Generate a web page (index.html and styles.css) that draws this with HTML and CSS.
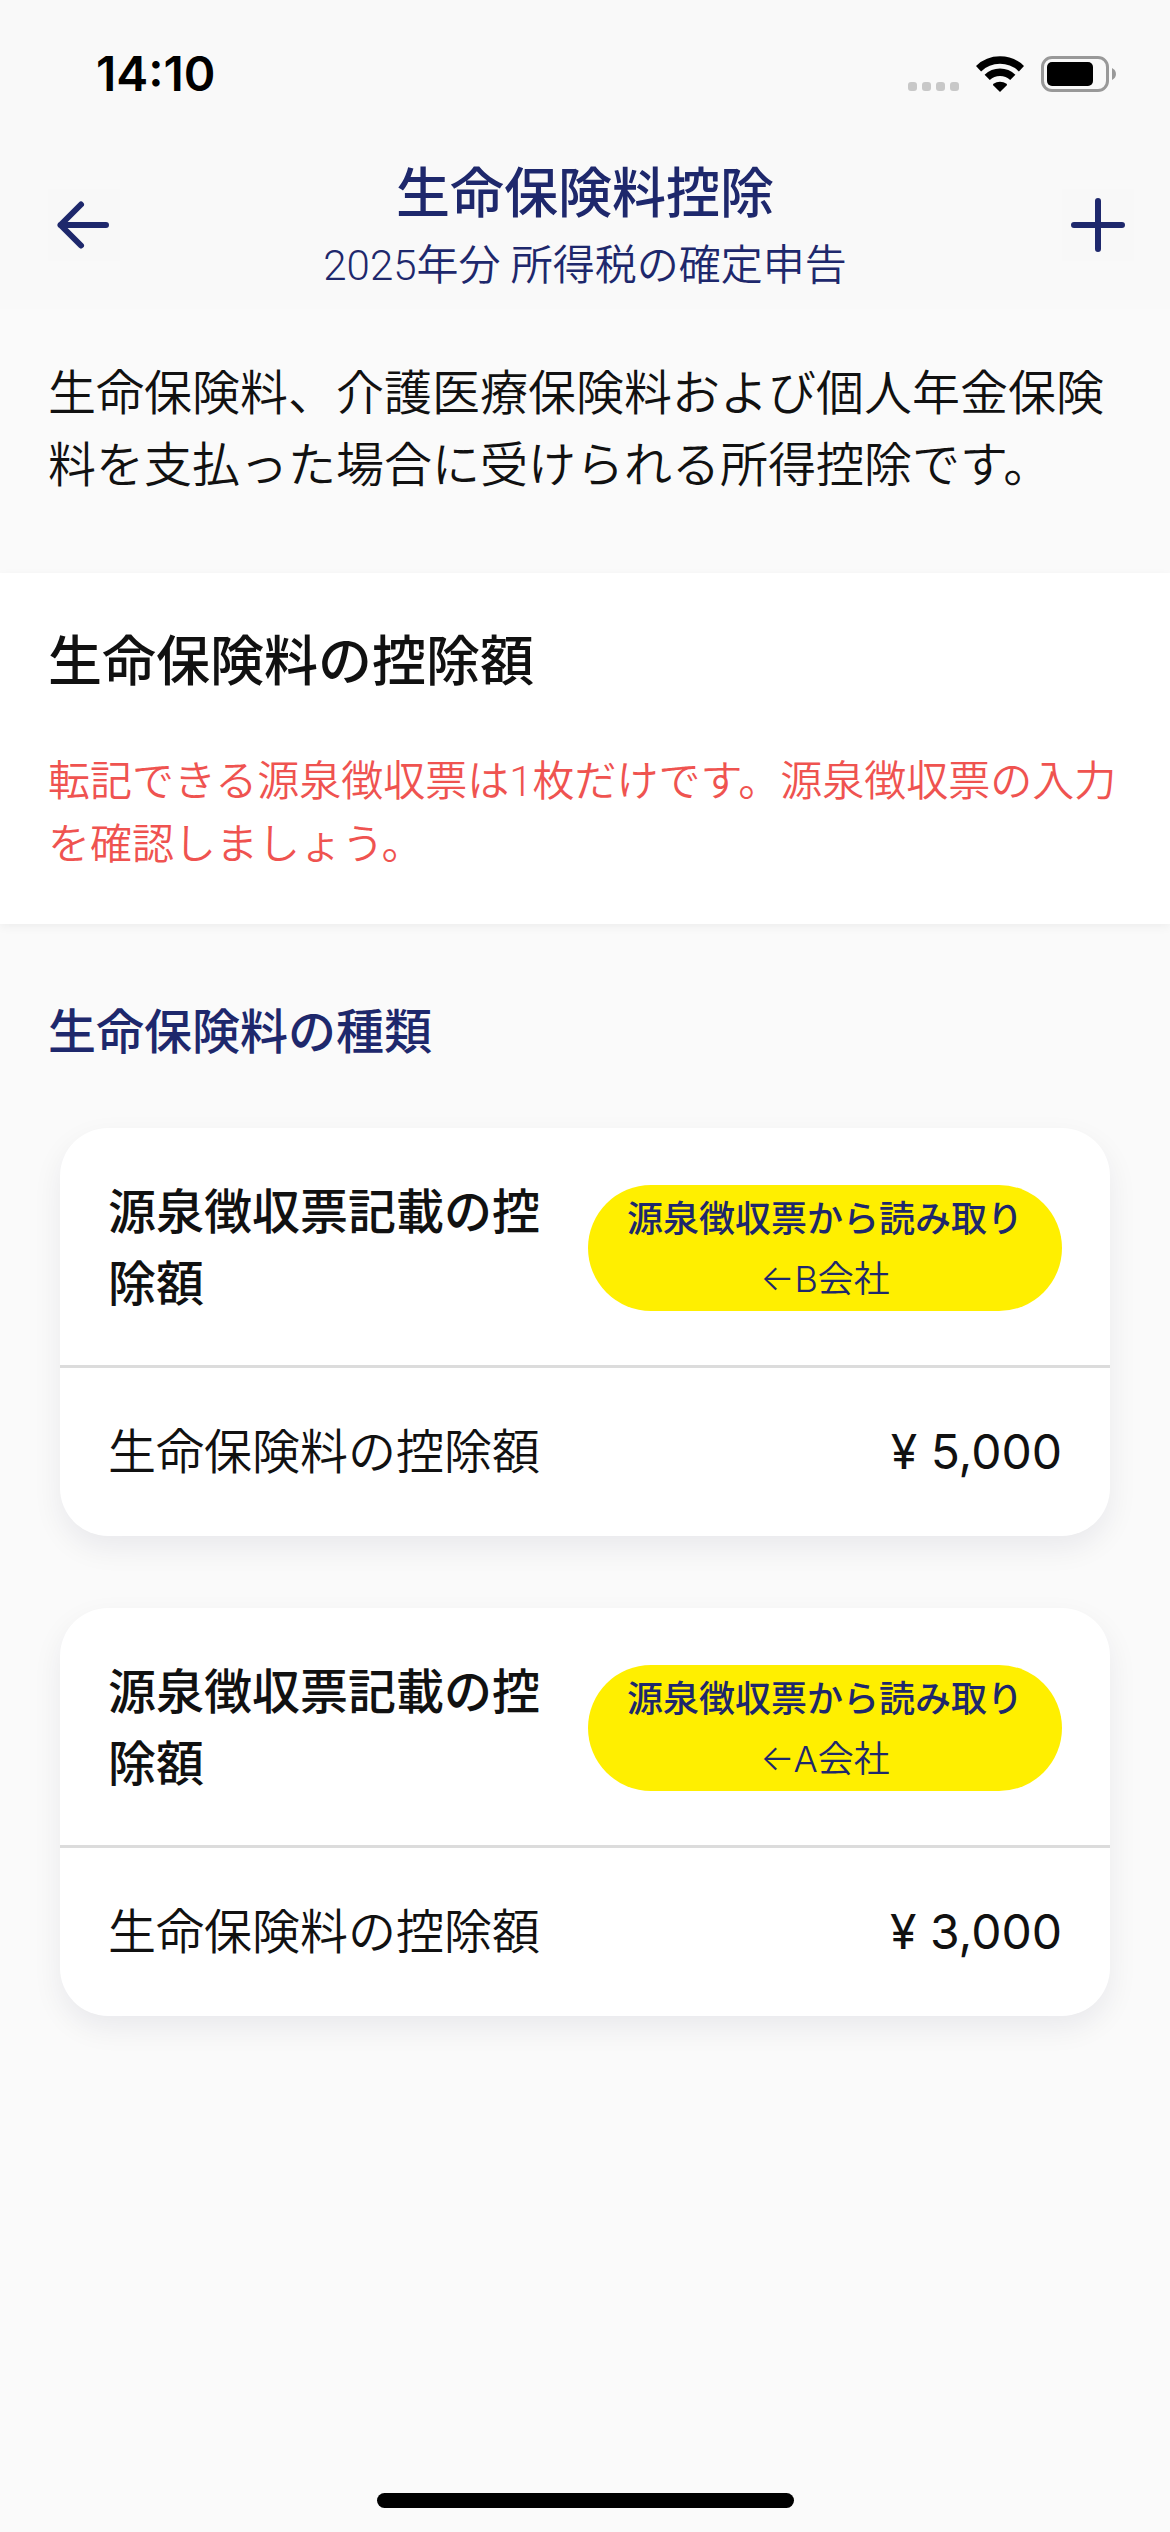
FILE: index.html
```html
<!DOCTYPE html>
<html lang="ja">

<head>
    <meta charset="UTF-8">
    <meta name="viewport" content="width=device-width, initial-scale=1.0">
    <title>生命保険料控除</title>
    <link rel="stylesheet" href="styles.css">
</head>

<body>
    <div class="status-bar">
        <span class="time">14:10</span>
        <div class="status-icons">
            <svg class="signal" width="51" height="36" viewBox="0 0 51 36" fill="#c8c8c8">
                <rect x="0" y="26" width="9" height="9" rx="3" />
                <rect x="14" y="26" width="9" height="9" rx="3" />
                <rect x="28" y="26" width="9" height="9" rx="3" />
                <rect x="42" y="26" width="9" height="9" rx="3" />
            </svg>
            <svg class="wifi" width="48" height="36" viewBox="0 0 48 36">
                <g fill="none" stroke="#000" stroke-width="7.5">
                    <path d="M2.5 12.7 A31 31 0 0 1 45.5 12.7" />
                    <path d="M11.2 21.4 A18.5 18.5 0 0 1 36.8 21.4" />
                </g>
                <path d="M24 36 L17.4 29.4 C16.9 28.9 17 28.2 17.5 27.8 C21.3 24.9 26.7 24.9 30.5 27.8 C31 28.2 31.1 28.9 30.6 29.4 Z" />
            </svg>
            <svg class="battery" width="75" height="36" viewBox="0 0 75 36">
                <rect x="1.5" y="1.5" width="65" height="33" rx="9.5" fill="none" stroke="#999" stroke-width="3" />
                <rect x="6" y="6" width="46" height="24" rx="5" />
                <path d="M71 12 C76.3 14.5 76.3 21.5 71 24 Z" fill="#999" />
            </svg>
        </div>
    </div>

    <header class="header">
        <button class="icon-button" type="button" aria-label="戻る">
            <svg width="72" height="72" viewBox="0 0 72 72">
                <path d="M58 36 H12.5 M33 15.5 L12.5 36 L33 56.5" />
            </svg>
        </button>
        <div class="header-text">
            <h1>生命保険料控除</h1>
            <p>2025年分 所得税の確定申告</p>
        </div>
        <button class="icon-button" type="button" aria-label="追加">
            <svg width="72" height="72" viewBox="0 0 72 72">
                <path d="M36 12 V60 M12 36 H60" />
            </svg>
        </button>
    </header>

    <main>
        <p class="intro">生命保険料、介護医療保険料および個人年金保険料を支払った場合に受けられる所得控除です。</p>

        <section class="summary">
            <h2>生命保険料の控除額</h2>
            <p class="warning">転記できる源泉徴収票は1枚だけです。源泉徴収票の入力を確認しましょう。</p>
        </section>

        <section class="types">
            <h2>生命保険料の種類</h2>

            <article class="card">
                <div class="card-header">
                    <h3>源泉徴収票記載の控除額</h3>
                    <div class="badge">
                        <strong>源泉徴収票から読み取り</strong>
                        <span>←B会社</span>
                    </div>
                </div>
                <dl class="card-row">
                    <dt>生命保険料の控除額</dt>
                    <dd>¥ 5,000</dd>
                </dl>
            </article>

            <article class="card">
                <div class="card-header">
                    <h3>源泉徴収票記載の控除額</h3>
                    <div class="badge">
                        <strong>源泉徴収票から読み取り</strong>
                        <span>←A会社</span>
                    </div>
                </div>
                <dl class="card-row">
                    <dt>生命保険料の控除額</dt>
                    <dd>¥ 3,000</dd>
                </dl>
            </article>
        </section>
    </main>

    <div class="home-indicator"></div>
</body>

</html>
```
FILE: styles.css
```css
* {
    box-sizing: border-box;
}

body {
    display: flex;
    flex-direction: column;
    min-height: 100vh;
    margin: 0;
    background-color: #fafafa;
    color: #111;
    font-family: Inter, "Noto Sans CJK JP", sans-serif;
    font-size: 48px;
    font-weight: 350;
    line-height: 72px;
}

h1,
h2,
h3,
p,
dl,
dd {
    margin: 0;
}

h1,
h2,
h3,
strong {
    font-weight: 500;
}

/* status bar */
.status-bar {
    display: flex;
    justify-content: space-between;
    align-items: center;
    height: 141px;
    padding: 7px 54px 0 96px;
    background-color: #f9f9f9;
}

.time {
    color: #000;
    font-size: 48px;
    font-weight: 600;
}

.status-icons {
    display: flex;
    gap: 17px;
}

/* header */
.header {
    display: grid;
    grid-template-columns: 84px 1fr 84px;
    align-items: center;
    padding: 12px 36px;
    background-color: #f9f9f9;
    color: #1e286c;
    text-align: center;
}

.header h1 {
    font-size: 54px;
    line-height: 81px;
}

.header p,
.warning {
    font-family: Roboto, "Noto Sans CJK JP", sans-serif;
    font-size: 42px;
    line-height: 63px;
}

.icon-button {
    justify-self: end;
    width: 72px;
    height: 72px;
    padding: 0;
    border: none;
    background-color: #f8f8f8;
    cursor: pointer;
}

.icon-button svg {
    display: block;
    fill: none;
    stroke: #1e286c;
    stroke-width: 6;
    stroke-linecap: round;
    stroke-linejoin: round;
}

.intro {
    padding: 48px 48px 72px;
}

/* summary */
.summary {
    display: flex;
    flex-direction: column;
    gap: 48px;
    padding: 48px;
    background-color: #fff;
    box-shadow: 0 3px 9px rgba(0, 0, 0, 0.05);
}

.summary h2 {
    font-size: 54px;
    line-height: 81px;
}

.warning {
    color: #ef5350;
}

/* cards */
.types {
    padding: 72px 60px;
}

.types h2 {
    margin: 0 -12px 60px;
    color: #1e286c;
    font-size: 48px;
}

.card {
    margin-bottom: 72px;
    border-radius: 48px;
    background-color: #fff;
    box-shadow: 0 12px 30px rgba(20, 20, 60, 0.07);
}

.card-header {
    display: flex;
    align-items: center;
    gap: 40px;
    padding: 48px 48px 45px;
    border-bottom: 3px solid #dcdcdc;
}

.card-header h3 {
    flex: 1;
    font-size: 48px;
}

.badge {
    display: flex;
    flex-direction: column;
    align-items: center;
    padding: 4px 39px 2px;
    border-radius: 63px;
    background-color: #ffef00;
    color: #1e286c;
    font-size: 36px;
    line-height: 60px;
}

.card-row {
    display: flex;
    justify-content: space-between;
    padding: 48px;
}

.card-row dd {
    font-weight: 400;
}

.home-indicator {
    width: 417px;
    height: 15px;
    margin: auto auto 24px;
    border-radius: 8px;
    background-color: #000;
}
```
